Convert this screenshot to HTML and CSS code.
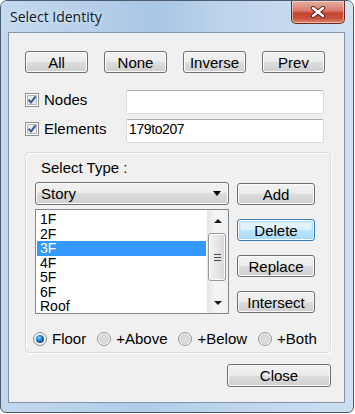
FILE: index.html
```html
<!DOCTYPE html>
<html lang="en">
<head>
    <meta charset="UTF-8">
    <meta name="viewport" content="width=device-width, initial-scale=1.0">
    <title>Select Identity</title>
    <link rel="stylesheet" href="styles.css">
</head>
<body>

    <div class="window">
        <!-- 标题栏 -->
        <div class="titlebar">
            <span class="title">Select Identity</span>
            <button class="close-x" type="button">
                <svg width="16" height="12" viewBox="0 0 16 12">
                    <path d="M3 2 L13 10 M13 2 L3 10" stroke="#5a1c16" stroke-width="4.2" stroke-linecap="round"/>
                    <path d="M3 2 L13 10 M13 2 L3 10" stroke="#ffffff" stroke-width="2.4" stroke-linecap="round"/>
                </svg>
            </button>
        </div>

        <div class="client">
            <!-- 选择按钮 -->
            <div class="btn-row">
                <button class="btn" type="button">All</button>
                <button class="btn" type="button">None</button>
                <button class="btn" type="button">Inverse</button>
                <button class="btn" type="button">Prev</button>
            </div>

            <div class="field-row">
                <label class="check">
                    <svg class="box" width="14" height="14" viewBox="0 0 14 14">
                        <rect x="0.5" y="0.5" width="13" height="13" fill="#fff" stroke="#8f8f8f"/>
                        <rect x="2.5" y="2.5" width="9" height="9" fill="#e9ecef" stroke="#b5b9be"/>
                        <path d="M3.6 6.8 L6 9.4 L10.6 3.4" fill="none" stroke="#3b5a96" stroke-width="2"/>
                    </svg>
                    Nodes
                </label>
                <input class="text-input" type="text" value="">
            </div>

            <div class="field-row">
                <label class="check">
                    <svg class="box" width="14" height="14" viewBox="0 0 14 14">
                        <rect x="0.5" y="0.5" width="13" height="13" fill="#fff" stroke="#8f8f8f"/>
                        <rect x="2.5" y="2.5" width="9" height="9" fill="#e9ecef" stroke="#b5b9be"/>
                        <path d="M3.6 6.8 L6 9.4 L10.6 3.4" fill="none" stroke="#3b5a96" stroke-width="2"/>
                    </svg>
                    Elements
                </label>
                <input class="text-input" type="text" value="179to207">
            </div>

            <!-- 类型分组 -->
            <div class="group">
                <div class="group-title">Select Type :</div>
                <div class="group-body">
                    <div class="left-col">
                        <div class="combo">
                            <span>Story</span>
                            <span class="combo-arrow"></span>
                        </div>
                        <div class="listbox">
                            <ul class="items">
                                <li>1F</li>
                                <li>2F</li>
                                <li class="selected">3F</li>
                                <li>4F</li>
                                <li>5F</li>
                                <li>6F</li>
                                <li>Roof</li>
                            </ul>
                            <div class="vscroll">
                                <div class="sb-btn"><span class="tri-up"></span></div>
                                <div class="sb-track">
                                    <div class="sb-thumb">
                                        <span class="grip"></span>
                                        <span class="grip"></span>
                                        <span class="grip"></span>
                                    </div>
                                </div>
                                <div class="sb-btn"><span class="tri-down"></span></div>
                            </div>
                        </div>
                    </div>
                    <div class="right-col">
                        <button class="btn" type="button">Add</button>
                        <button class="btn focused" type="button">Delete</button>
                        <button class="btn" type="button">Replace</button>
                        <button class="btn" type="button">Intersect</button>
                    </div>
                </div>

                <div class="radio-row">
                    <label class="radio">
                        <svg width="14" height="14" viewBox="0 0 14 14">
                            <defs>
                                <radialGradient id="dot" cx="0.4" cy="0.35" r="0.7">
                                    <stop offset="0" stop-color="#8fd3ff"/>
                                    <stop offset="0.5" stop-color="#1f7fd0"/>
                                    <stop offset="1" stop-color="#0b3f7a"/>
                                </radialGradient>
                            </defs>
                            <circle cx="7" cy="7" r="6.5" fill="#f2f2f2" stroke="#8b8b8b"/>
                            <circle cx="7" cy="7" r="4" fill="url(#dot)"/>
                        </svg>
                        Floor
                    </label>
                    <label class="radio">
                        <svg width="14" height="14" viewBox="0 0 14 14">
                            <circle cx="7" cy="7" r="6.5" fill="#f4f4f4" stroke="#939393"/>
                            <circle cx="7" cy="7" r="4.2" fill="#dcdcdc" stroke="#c8c8c8"/>
                        </svg>
                        +Above
                    </label>
                    <label class="radio">
                        <svg width="14" height="14" viewBox="0 0 14 14">
                            <circle cx="7" cy="7" r="6.5" fill="#f4f4f4" stroke="#939393"/>
                            <circle cx="7" cy="7" r="4.2" fill="#dcdcdc" stroke="#c8c8c8"/>
                        </svg>
                        +Below
                    </label>
                    <label class="radio">
                        <svg width="14" height="14" viewBox="0 0 14 14">
                            <circle cx="7" cy="7" r="6.5" fill="#f4f4f4" stroke="#939393"/>
                            <circle cx="7" cy="7" r="4.2" fill="#dcdcdc" stroke="#c8c8c8"/>
                        </svg>
                        +Both
                    </label>
                </div>
            </div>

            <div class="footer">
                <button class="btn close-btn" type="button">Close</button>
            </div>
        </div>
    </div>

</body>
</html>
```

FILE: styles.css
```css
body {
    margin: 0;
    padding: 0;
    background-color: #ffffff;
    font-family: 'Liberation Sans', Arial, sans-serif;
    font-size: 15px;
    color: #000;
}

.window {
    width: 354px;
    height: 413px;
    box-sizing: border-box;
    border: 1px solid #4d5b6e;
    border-radius: 7px 7px 6px 6px;
    background: linear-gradient(to right, #c3d8ef, #b2cce8 40%, #c0d6ee 70%, #cddff2);
    overflow: hidden;
}

.titlebar {
    height: 31px;
    display: flex;
    justify-content: space-between;
    align-items: flex-start;
    padding-left: 9px;
    background: linear-gradient(to right, #c4d9ef, #a9c6e5 45%, #bcd3eb 62%, #d0e1f3);
}

.title {
    font-family: 'Open Sans', 'Noto Sans', sans-serif;
    font-size: 14px;
    line-height: 20px;
    margin-top: 6px;
    color: #0c1628;
    text-shadow: 0 0 6px rgba(255, 255, 255, 0.9);
}

.close-x {
    width: 54px;
    height: 23px;
    margin-right: 8px;
    padding: 0;
    border: 1px solid #6b2a22;
    border-top: none;
    border-radius: 0 0 5px 5px;
    background: linear-gradient(#e7b0a5, #d8776a 45%, #c5432f 55%, #c9533d 80%, #dc8b6c);
    box-shadow: inset 0 0 0 1px rgba(255, 220, 210, 0.6);
    display: flex;
    justify-content: center;
    align-items: center;
}

.client {
    height: 371px;
    box-sizing: border-box;
    margin: 0 8px 0 7px;
    border: 1px solid #8395ab;
    background-color: #f0f0f0;
    padding: 18px 13px 0 16px;
}

.btn {
    height: 22px;
    padding: 0;
    font-family: 'Liberation Sans', Arial, sans-serif;
    font-size: 15px;
    color: #000;
    border: 1px solid #707070;
    border-radius: 3px;
    background: linear-gradient(#f2f2f2, #ebebeb 50%, #dddddd 50%, #cfcfcf);
    box-shadow: inset 0 0 0 1px #fbfbfb;
}

.btn.focused {
    border-color: #3c7fb1;
    background: linear-gradient(#eaf6fd, #d9f0fc 50%, #bee6fd 50%, #a7d9f5);
    box-shadow: inset 0 0 0 1px #fff, inset 0 0 2px 2px #9fdcf5;
}

.btn-row {
    display: flex;
    gap: 16px;
}

.btn-row .btn {
    width: 63px;
}

.field-row {
    display: flex;
    align-items: flex-start;
    margin-top: 17px;
}

.field-row + .field-row {
    margin-top: 5px;
}

.check {
    width: 101px;
    display: flex;
    align-items: center;
    gap: 5px;
    line-height: 17px;
    padding-top: 1px;
}

.text-input {
    width: 198px;
    height: 24px;
    box-sizing: border-box;
    margin: 0;
    padding: 0 2px 5px 2px;
    border: 1px solid #d6dbe2;
    border-top-color: #abadb3;
    border-radius: 2px;
    background: #fff;
    font-family: 'Liberation Sans', Arial, sans-serif;
    font-size: 14px;
    letter-spacing: -0.4px;
    outline: none;
}

.group {
    margin-top: 9px;
    width: 306px;
    height: 201px;
    box-sizing: border-box;
    border: 1px solid #d5dfe5;
    border-radius: 4px;
    box-shadow: inset 1px 1px 0 #fff, 1px 1px 0 #fff;
    padding: 6px 0 6px 9px;
}

.group-title {
    line-height: 17px;
    margin-left: 6px;
}

.group-body {
    display: flex;
    gap: 8px;
    margin-top: 6px;
}

.left-col {
    width: 194px;
    display: flex;
    flex-direction: column;
    gap: 4px;
}

.combo {
    height: 23px;
    box-sizing: border-box;
    display: flex;
    justify-content: space-between;
    align-items: center;
    padding: 0 7px 0 5px;
    border: 1px solid #707070;
    border-radius: 3px;
    background: linear-gradient(#f2f2f2, #ebebeb 50%, #dddddd 50%, #cfcfcf);
    box-shadow: inset 0 0 0 1px #fbfbfb;
}

.combo-arrow {
    width: 0;
    height: 0;
    border-top: 5px solid #000;
    border-left: 4px solid transparent;
    border-right: 4px solid transparent;
}

.listbox {
    height: 105px;
    box-sizing: border-box;
    display: flex;
    border: 1px solid #828790;
    background: #fff;
}

.items {
    flex: 1;
    list-style: none;
    margin: 0;
    padding: 2px 1px 0 1px;
    font-size: 14px;
}

.items li {
    height: 14.5px;
    line-height: 14.5px;
    padding-left: 3px;
    white-space: nowrap;
}

.items li.selected {
    background-color: #3399ff;
    color: #fff;
}

.vscroll {
    width: 21px;
    display: flex;
    flex-direction: column;
    background: linear-gradient(to right, #e6e6e6, #f5f5f5 40%, #f0f0f0);
}

.sb-btn {
    height: 21px;
    display: flex;
    justify-content: center;
    align-items: center;
}

.tri-up,
.tri-down {
    width: 0;
    height: 0;
    border-left: 4px solid transparent;
    border-right: 4px solid transparent;
}

.tri-up {
    border-bottom: 4px solid #1a1a1a;
}

.tri-down {
    border-top: 4px solid #1a1a1a;
}

.sb-track {
    flex: 1;
    padding: 2px 2px 0 1px;
}

.sb-thumb {
    height: 48px;
    box-sizing: border-box;
    border: 1px solid #979797;
    border-radius: 3px;
    background: linear-gradient(to right, #f4f4f4, #e6e6e6 50%, #d6d6d6);
    box-shadow: inset 0 0 0 1px #fcfcfc;
    display: flex;
    flex-direction: column;
    justify-content: center;
    align-items: center;
    gap: 2px;
}

.grip {
    width: 7px;
    height: 1px;
    background-color: #4c4c4c;
}

.right-col {
    width: 78px;
    display: flex;
    flex-direction: column;
    gap: 14px;
    padding-top: 1px;
}

.right-col .btn {
    width: 78px;
}

.radio-row {
    display: flex;
    align-items: center;
    gap: 11px;
    margin-top: 17px;
    margin-left: -2px;
    height: 15px;
}

.radio {
    display: flex;
    align-items: center;
    gap: 5px;
    line-height: 17px;
}

.footer {
    display: flex;
    justify-content: flex-end;
    margin-top: 11px;
}

.close-btn {
    width: 104px;
    height: 23px;
}
```
